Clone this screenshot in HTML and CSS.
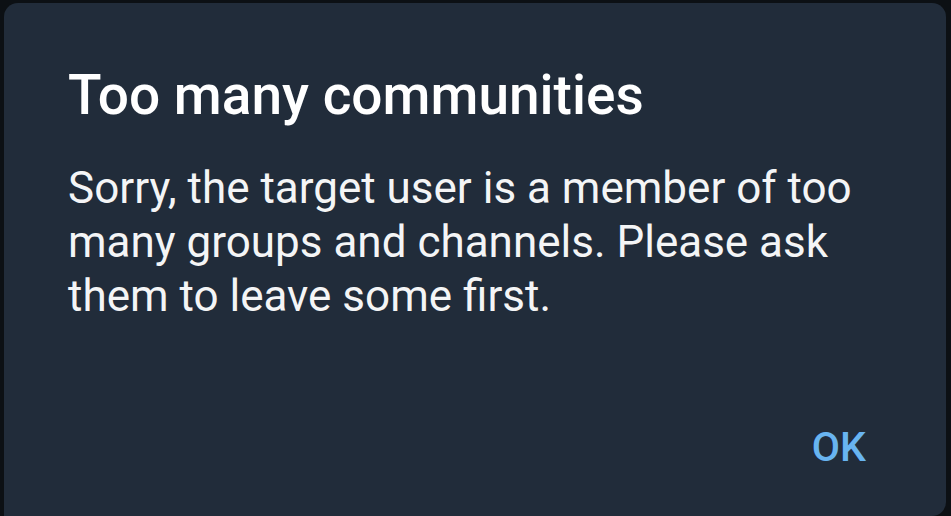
FILE: index.html
```html
<html>
<head>
     <title>Too many communities</title>
     <link rel="stylesheet" href="styles.css">
</head>
<body>
     <div class="dialog">
          <h1 class="title">Too many communities</h1>
          <p class="message">Sorry, the target user is a member of too many groups and channels. Please ask them to leave some first.</p>
          <div class="actions">
               <button class="ok">OK</button>
          </div>
     </div>
</body>
</html>
```

FILE: styles.css
```css
html, body {
     height: 100%;
}

body {
     margin: 0;
     background-color: #0c1014;
     font-family: Roboto, "Noto Sans", sans-serif;
     overflow: hidden;
}

.dialog {
     box-sizing: border-box;
     height: calc(100% - 3px);
     margin: 3px 5px 0 4px;
     padding: 60px 80px 0 64px;
     background-color: #212c3a;
     border-radius: 14px 14px 14px 0;
}

.title {
     margin: 0;
     font-size: 55px;
     font-weight: 500;
     line-height: 64px;
     color: #ffffff;
}

.message {
     margin: 34px 0 0 0;
     font-size: 44px;
     line-height: 54px;
     color: #f4f5f6;
}

.actions {
     display: flex;
     justify-content: flex-end;
     margin-top: 100px;
}

.ok {
     padding: 0;
     background: none;
     border: none;
     font-family: Roboto, "Noto Sans", sans-serif;
     font-size: 41px;
     font-weight: 500;
     color: #68b4f0;
     cursor: pointer;
}
```
